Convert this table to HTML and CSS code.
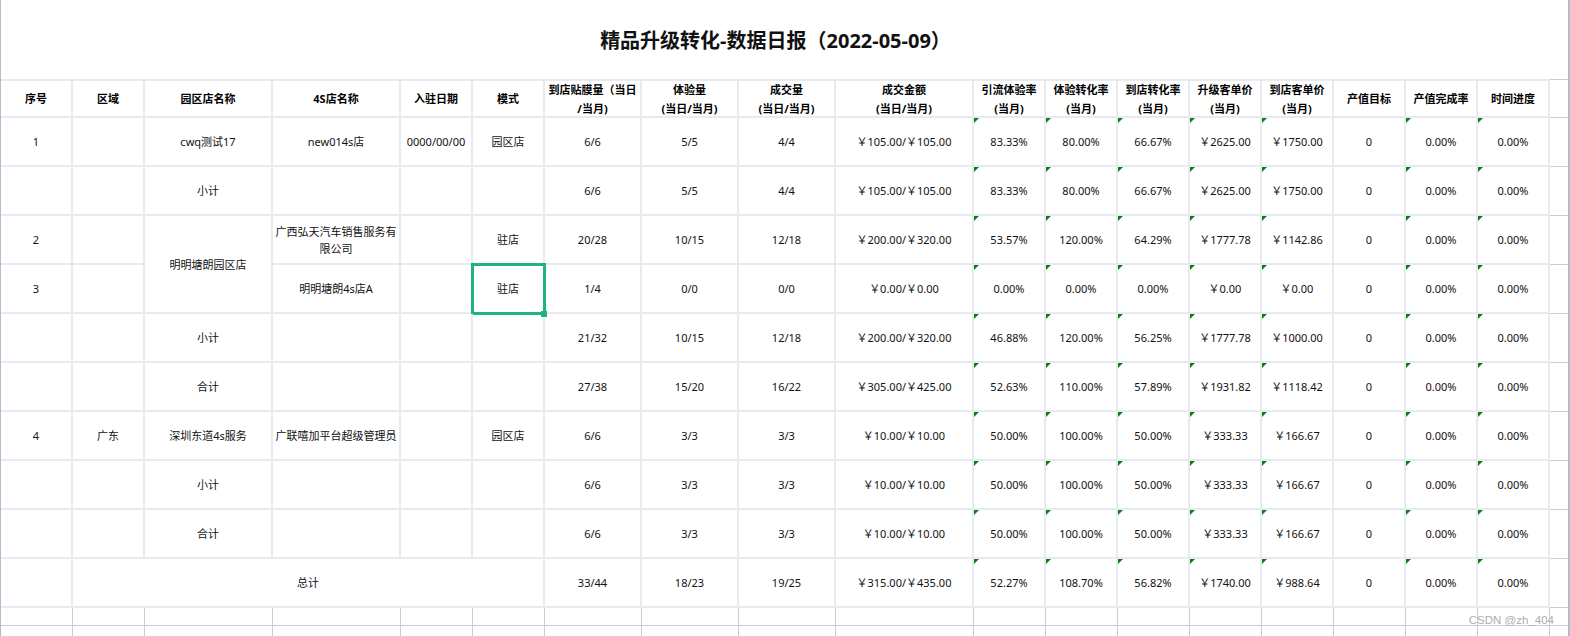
FILE: index.html
```html
<!DOCTYPE html>
<html lang="zh-CN">
<head>
<meta charset="utf-8">
<title>精品升级转化-数据日报</title>
<link rel="stylesheet" href="styles.css">
</head>
<body>
<div class="sheet">
  <div class="title">精品升级转化-数据日报（2022-05-09）</div>
  <div class="grid">
    <div class="c h">序号</div>
    <div class="c h">区域</div>
    <div class="c h">园区店名称</div>
    <div class="c h">4S店名称</div>
    <div class="c h">入驻日期</div>
    <div class="c h">模式</div>
    <div class="c h">到店贴膜量（当日<br>/当月)</div>
    <div class="c h">体验量<br>(当日/当月)</div>
    <div class="c h">成交量<br>(当日/当月)</div>
    <div class="c h">成交金额<br>(当日/当月)</div>
    <div class="c h">引流体验率<br>(当月)</div>
    <div class="c h">体验转化率<br>(当月)</div>
    <div class="c h">到店转化率<br>(当月)</div>
    <div class="c h">升级客单价<br>(当月)</div>
    <div class="c h">到店客单价<br>(当月)</div>
    <div class="c h">产值目标</div>
    <div class="c h">产值完成率</div>
    <div class="c h">时间进度</div>
    <div class="c x hx"></div>

    <!-- row 1 -->
    <div class="c">1</div>
    <div class="c"></div>
    <div class="c">cwq测试17</div>
    <div class="c">new014s店</div>
    <div class="c">0000/00/00</div>
    <div class="c">园区店</div>
    <div class="c">6/6</div>
    <div class="c">5/5</div>
    <div class="c">4/4</div>
    <div class="c">￥105.00/￥105.00</div>
    <div class="c t">83.33%</div>
    <div class="c t">80.00%</div>
    <div class="c t">66.67%</div>
    <div class="c t">￥2625.00</div>
    <div class="c t">￥1750.00</div>
    <div class="c">0</div>
    <div class="c t">0.00%</div>
    <div class="c t">0.00%</div>
    <div class="c x"></div>

    <!-- row 2 -->
    <div class="c"></div>
    <div class="c"></div>
    <div class="c">小计</div>
    <div class="c"></div>
    <div class="c"></div>
    <div class="c"></div>
    <div class="c">6/6</div>
    <div class="c">5/5</div>
    <div class="c">4/4</div>
    <div class="c">￥105.00/￥105.00</div>
    <div class="c t">83.33%</div>
    <div class="c t">80.00%</div>
    <div class="c t">66.67%</div>
    <div class="c t">￥2625.00</div>
    <div class="c t">￥1750.00</div>
    <div class="c">0</div>
    <div class="c t">0.00%</div>
    <div class="c t">0.00%</div>
    <div class="c x"></div>

    <!-- row 3 -->
    <div class="c">2</div>
    <div class="c"></div>
    <div class="c r2">明明塘朗园区店</div>
    <div class="c">广西弘天汽车销售服务有<br>限公司</div>
    <div class="c"></div>
    <div class="c">驻店</div>
    <div class="c">20/28</div>
    <div class="c">10/15</div>
    <div class="c">12/18</div>
    <div class="c">￥200.00/￥320.00</div>
    <div class="c t">53.57%</div>
    <div class="c t">120.00%</div>
    <div class="c t">64.29%</div>
    <div class="c t">￥1777.78</div>
    <div class="c t">￥1142.86</div>
    <div class="c">0</div>
    <div class="c t">0.00%</div>
    <div class="c t">0.00%</div>
    <div class="c x"></div>

    <!-- row 4 -->
    <div class="c">3</div>
    <div class="c"></div>
    <div class="c">明明塘朗4s店A</div>
    <div class="c"></div>
    <div class="c sel">驻店</div>
    <div class="c">1/4</div>
    <div class="c">0/0</div>
    <div class="c">0/0</div>
    <div class="c">￥0.00/￥0.00</div>
    <div class="c t">0.00%</div>
    <div class="c t">0.00%</div>
    <div class="c t">0.00%</div>
    <div class="c t">￥0.00</div>
    <div class="c t">￥0.00</div>
    <div class="c">0</div>
    <div class="c t">0.00%</div>
    <div class="c t">0.00%</div>
    <div class="c x"></div>

    <!-- row 5 -->
    <div class="c"></div>
    <div class="c"></div>
    <div class="c">小计</div>
    <div class="c"></div>
    <div class="c"></div>
    <div class="c"></div>
    <div class="c">21/32</div>
    <div class="c">10/15</div>
    <div class="c">12/18</div>
    <div class="c">￥200.00/￥320.00</div>
    <div class="c t">46.88%</div>
    <div class="c t">120.00%</div>
    <div class="c t">56.25%</div>
    <div class="c t">￥1777.78</div>
    <div class="c t">￥1000.00</div>
    <div class="c">0</div>
    <div class="c t">0.00%</div>
    <div class="c t">0.00%</div>
    <div class="c x"></div>

    <!-- row 6 -->
    <div class="c"></div>
    <div class="c"></div>
    <div class="c">合计</div>
    <div class="c"></div>
    <div class="c"></div>
    <div class="c"></div>
    <div class="c">27/38</div>
    <div class="c">15/20</div>
    <div class="c">16/22</div>
    <div class="c">￥305.00/￥425.00</div>
    <div class="c t">52.63%</div>
    <div class="c t">110.00%</div>
    <div class="c t">57.89%</div>
    <div class="c t">￥1931.82</div>
    <div class="c t">￥1118.42</div>
    <div class="c">0</div>
    <div class="c t">0.00%</div>
    <div class="c t">0.00%</div>
    <div class="c x"></div>

    <!-- row 7 -->
    <div class="c">4</div>
    <div class="c">广东</div>
    <div class="c">深圳东道4s服务</div>
    <div class="c">广联嘻加平台超级管理员</div>
    <div class="c"></div>
    <div class="c">园区店</div>
    <div class="c">6/6</div>
    <div class="c">3/3</div>
    <div class="c">3/3</div>
    <div class="c">￥10.00/￥10.00</div>
    <div class="c t">50.00%</div>
    <div class="c t">100.00%</div>
    <div class="c t">50.00%</div>
    <div class="c t">￥333.33</div>
    <div class="c t">￥166.67</div>
    <div class="c">0</div>
    <div class="c t">0.00%</div>
    <div class="c t">0.00%</div>
    <div class="c x"></div>

    <!-- row 8 -->
    <div class="c"></div>
    <div class="c"></div>
    <div class="c">小计</div>
    <div class="c"></div>
    <div class="c"></div>
    <div class="c"></div>
    <div class="c">6/6</div>
    <div class="c">3/3</div>
    <div class="c">3/3</div>
    <div class="c">￥10.00/￥10.00</div>
    <div class="c t">50.00%</div>
    <div class="c t">100.00%</div>
    <div class="c t">50.00%</div>
    <div class="c t">￥333.33</div>
    <div class="c t">￥166.67</div>
    <div class="c">0</div>
    <div class="c t">0.00%</div>
    <div class="c t">0.00%</div>
    <div class="c x"></div>

    <!-- row 9 -->
    <div class="c"></div>
    <div class="c"></div>
    <div class="c">合计</div>
    <div class="c"></div>
    <div class="c"></div>
    <div class="c"></div>
    <div class="c">6/6</div>
    <div class="c">3/3</div>
    <div class="c">3/3</div>
    <div class="c">￥10.00/￥10.00</div>
    <div class="c t">50.00%</div>
    <div class="c t">100.00%</div>
    <div class="c t">50.00%</div>
    <div class="c t">￥333.33</div>
    <div class="c t">￥166.67</div>
    <div class="c">0</div>
    <div class="c t">0.00%</div>
    <div class="c t">0.00%</div>
    <div class="c x"></div>

    <!-- row 10 -->
    <div class="c"></div>
    <div class="c s5">总计</div>
    <div class="c">33/44</div>
    <div class="c">18/23</div>
    <div class="c">19/25</div>
    <div class="c">￥315.00/￥435.00</div>
    <div class="c t">52.27%</div>
    <div class="c t">108.70%</div>
    <div class="c t">56.82%</div>
    <div class="c t">￥1740.00</div>
    <div class="c t">￥988.64</div>
    <div class="c">0</div>
    <div class="c t">0.00%</div>
    <div class="c t">0.00%</div>
    <div class="c x"></div>

    <!-- empty rows -->
    <div class="c e"></div><div class="c e"></div><div class="c e"></div><div class="c e"></div><div class="c e"></div><div class="c e"></div><div class="c e"></div><div class="c e"></div><div class="c e"></div><div class="c e"></div><div class="c e"></div><div class="c e"></div><div class="c e"></div><div class="c e"></div><div class="c e"></div><div class="c e"></div><div class="c e"></div><div class="c e"></div><div class="c e x"></div>
    <div class="c e"></div><div class="c e"></div><div class="c e"></div><div class="c e"></div><div class="c e"></div><div class="c e"></div><div class="c e"></div><div class="c e"></div><div class="c e"></div><div class="c e"></div><div class="c e"></div><div class="c e"></div><div class="c e"></div><div class="c e"></div><div class="c e"></div><div class="c e"></div><div class="c e"></div><div class="c e"></div><div class="c e x"></div>
  </div>
  <div class="row-mark"></div>
  <div class="watermark">CSDN @zh_404</div>
</div>
</body>
</html>
```

FILE: styles.css
```css
*,
*::before,
*::after {
  box-sizing: border-box;
}

body {
  margin: 0;
  background: #ffffff;
  font-family: "Noto Sans", "Noto Sans CJK SC", sans-serif;
  color: #111111;
}

.sheet {
  position: relative;
  width: 1570px;
  height: 636px;
  overflow: hidden;
  border-left: 1px solid #b3bccf;
  border-right: 2px solid #b3bccf;
  background: #ffffff;
}

.title {
  width: 1549px;
  height: 79px;
  display: flex;
  align-items: center;
  justify-content: center;
  font-size: 20px;
  font-weight: 700;
  color: #111111;
}

.grid {
  display: grid;
  grid-template-columns: 72px 72px 128px 128px 72px 72px 97px 97px 97px 138px repeat(8, 72px) 18px;
  grid-template-rows: 39px repeat(10, 49px) 18px 18px;
}

.c {
  position: relative;
  display: flex;
  align-items: center;
  justify-content: center;
  text-align: center;
  border-right: 2px solid #e7eaf1;
  border-bottom: 2px solid #e7eaf1;
  font-size: 11px;
  line-height: 17px;
  white-space: nowrap;
}

.h {
  border-top: 2px solid #e7eaf1;
  font-weight: 700;
  line-height: 19px;
  color: #000000;
}

.e {
  border-right: 1px solid #c8ccdb;
  border-bottom: 1px solid #c8ccdb;
}

.x {
  border-right: none;
  border-bottom: 1px solid #c8ccdb;
}

.hx {
  border-top: 1px solid #c8ccdb;
}

.r2 {
  grid-row: span 2;
}

.s5 {
  grid-column: span 5;
}

.t::before {
  content: "";
  position: absolute;
  left: 0;
  top: 0;
  width: 5px;
  height: 5px;
  border-top: 5px solid #0b800b;
  border-right: 5px solid transparent;
}

.sel::after {
  content: "";
  position: absolute;
  left: -2px;
  top: -2px;
  width: 75px;
  height: 52px;
  border: 3px solid #1fb57a;
}

.sel::before {
  content: "";
  position: absolute;
  left: 68px;
  top: 46px;
  width: 6px;
  height: 6px;
  background: #1fb57a;
  z-index: 1;
}

.row-mark {
  position: absolute;
  left: -1px;
  top: 263px;
  width: 1px;
  height: 50px;
  background: #1fb57a;
}

.watermark {
  position: absolute;
  right: 14px;
  top: 612px;
  font-family: "Liberation Sans", Arial, sans-serif;
  font-size: 11.5px;
  line-height: 16px;
  color: #adadad;
}
```
